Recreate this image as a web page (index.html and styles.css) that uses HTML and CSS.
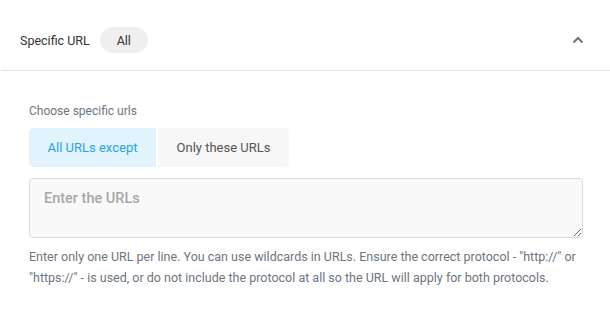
FILE: index.html
```html
<!DOCTYPE html>
<html>
<head>
<meta charset="utf-8">
<link rel="stylesheet" href="styles.css">
</head>
<body>
<div class="panel">
  <div class="head">
    <div class="head-left">
      <span class="title">Specific URL</span>
      <span class="pill">All</span>
    </div>
    <svg class="chev" width="12" height="8" viewBox="0 0 12 8"><path d="M1.5 6.5 L6 2 L10.5 6.5" fill="none" stroke="#6b7580" stroke-width="2"/></svg>
  </div>
  <div class="body">
    <div class="label">Choose specific urls</div>
    <div class="seg">
      <button class="seg-btn active">All URLs except</button>
      <button class="seg-btn">Only these URLs</button>
    </div>
    <textarea class="urls" placeholder="Enter the URLs"></textarea>
    <p class="help">Enter only one URL per line. You can use wildcards in URLs. Ensure the correct protocol - "http://" or "https://" - is used, or do not include the protocol at all so the URL will apply for both protocols.</p>
  </div>
</div>
</body>
</html>
```
FILE: styles.css
```css
html, body {
  margin: 0;
  padding: 0;
  background: #fff;
}
body {
  font-family: Roboto, "Liberation Sans", sans-serif;
  width: 610px;
}
.panel {
  width: 610px;
}
.head {
  display: flex;
  align-items: center;
  justify-content: space-between;
  height: 71px;
  padding: 10px 26px 0 19px;
  box-sizing: border-box;
  border-bottom: 1px solid #e4e4e4;
  margin-left: 1px;
}
.head-left {
  display: flex;
  align-items: center;
  gap: 10px;
}
.title {
  font-size: 12.5px;
  color: #333;
}
.pill {
  display: inline-flex;
  align-items: center;
  justify-content: center;
  width: 48px;
  height: 26px;
  border-radius: 13px;
  background: #efefef;
  font-size: 12.5px;
  color: #333;
}
.chev {
  display: block;
}
.body {
  padding: 33px 27px 0 29px;
}
.label {
  font-size: 12px;
  color: #6d7580;
  line-height: 14px;
  margin-bottom: 10px;
}
.seg {
  display: flex;
  gap: 2px;
  margin-bottom: 11px;
}
.seg-btn {
  border: none;
  height: 39px;
  font-family: inherit;
  font-size: 13px;
  background: #f7f7f7;
  color: #555;
  padding: 0 0 1px;
  width: 131px;
  border-radius: 0 5px 5px 0;
}
.seg-btn.active {
  width: 127px;
  background: #e1f4fd;
  color: #2ba3dc;
  border-radius: 5px 0 0 5px;
}
.urls {
  display: block;
  width: 554px;
  height: 60px;
  box-sizing: border-box;
  border: 1px solid #dcdcdc;
  border-radius: 4px;
  background: #f9f9f9;
  padding: 11px 14px;
  font-family: inherit;
  font-size: 14.5px;
  margin: 0;
}
.urls::placeholder {
  color: #a7a7a7;
  font-weight: 500;
}
.help {
  margin: 8px 0 0;
  font-size: 12.5px;
  line-height: 21px;
  color: #6d7580;
}
```
